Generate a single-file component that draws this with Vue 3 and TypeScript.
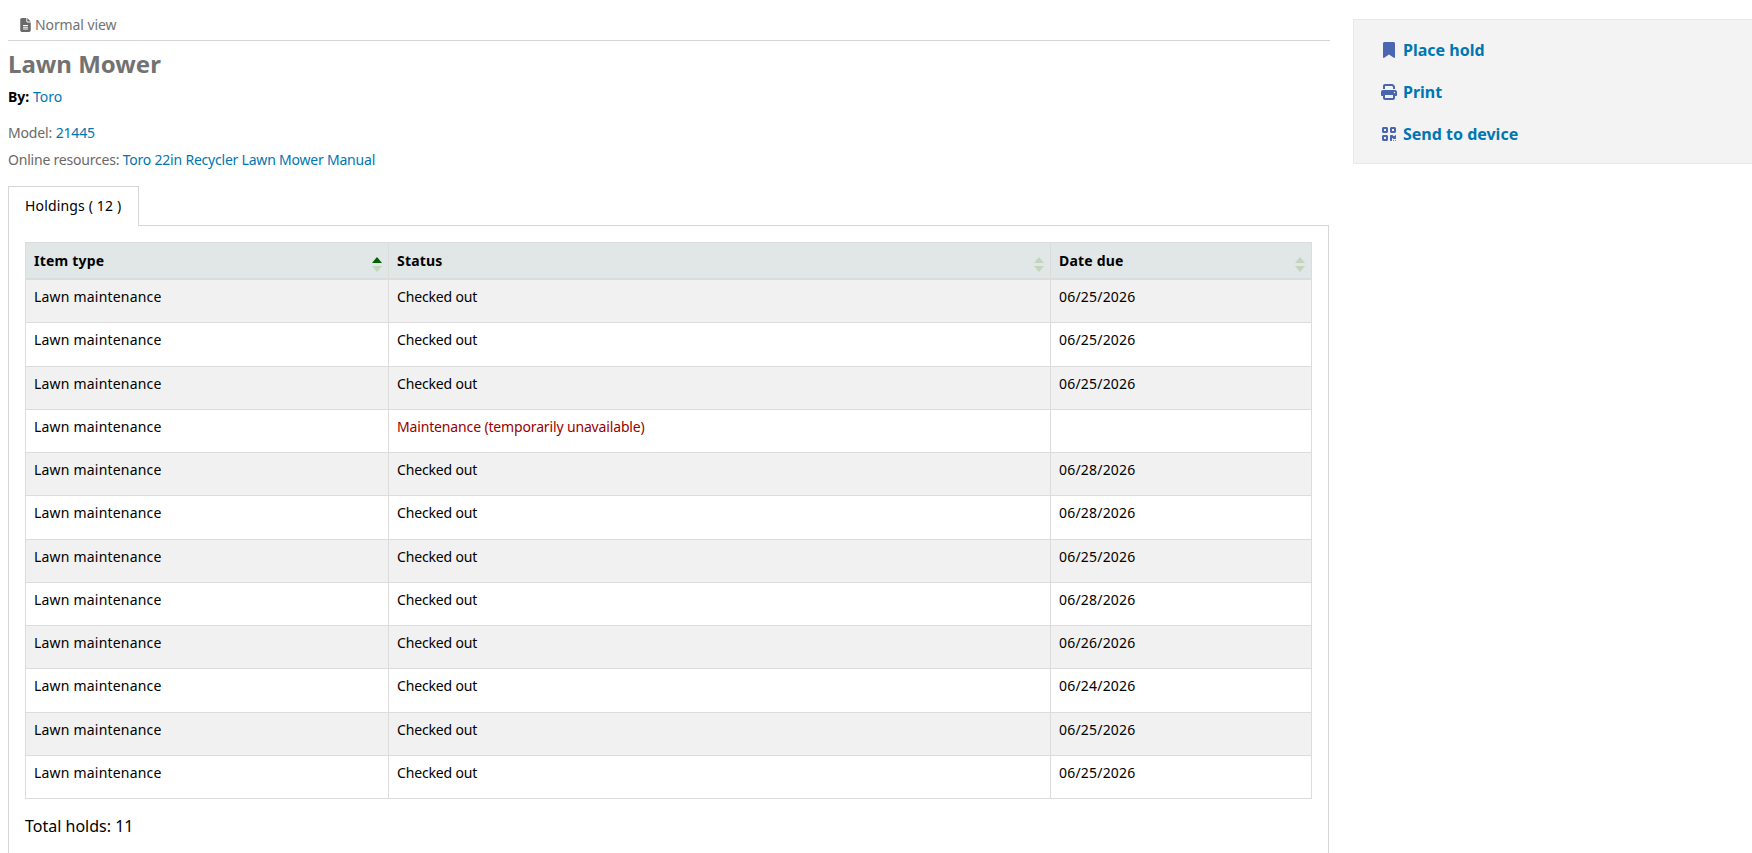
<script setup lang="ts">
interface Holding {
  status: string
  due: string
  unavailable?: boolean
}

const holdings: Holding[] = [
  { status: 'Checked out', due: '06/25/2026' },
  { status: 'Checked out', due: '06/25/2026' },
  { status: 'Checked out', due: '06/25/2026' },
  { status: 'Maintenance (temporarily unavailable)', due: '', unavailable: true },
  { status: 'Checked out', due: '06/28/2026' },
  { status: 'Checked out', due: '06/28/2026' },
  { status: 'Checked out', due: '06/25/2026' },
  { status: 'Checked out', due: '06/28/2026' },
  { status: 'Checked out', due: '06/26/2026' },
  { status: 'Checked out', due: '06/24/2026' },
  { status: 'Checked out', due: '06/25/2026' },
  { status: 'Checked out', due: '06/25/2026' },
]

const columns = ['Item type', 'Status', 'Date due']
</script>

<template>
  <div class="page">
    <main class="record">
      <div class="views">
        <svg class="view-icon" viewBox="0 0 384 512"><path d="M64 0C28.7 0 0 28.7 0 64V448c0 35.3 28.7 64 64 64H320c35.3 0 64-28.7 64-64V160H256c-17.7 0-32-14.3-32-32V0H64zM256 0V128H384L256 0zM112 256H272c8.8 0 16 7.2 16 16s-7.2 16-16 16H112c-8.8 0-16-7.2-16-16s7.2-16 16-16zm0 64H272c8.8 0 16 7.2 16 16s-7.2 16-16 16H112c-8.8 0-16-7.2-16-16s7.2-16 16-16zm0 64H272c8.8 0 16 7.2 16 16s-7.2 16-16 16H112c-8.8 0-16-7.2-16-16s7.2-16 16-16z" /></svg>
        <span>Normal view</span>
      </div>
      <h1 class="title">Lawn Mower</h1>
      <p class="author"><b>By:</b> <a href="#">Toro</a></p>
      <p class="meta first">Model: <a href="#">21445</a></p>
      <p class="meta">Online resources: <a href="#">Toro 22in Recycler Lawn Mower Manual</a></p>

      <div class="tab-row">
        <div class="tab">Holdings ( 12 )</div>
      </div>
      <section class="panel">
        <table class="holdings">
          <thead>
            <tr>
              <th v-for="(col, i) in columns" :key="col">
                {{ col }}
                <span class="sort">
                  <i class="up" :class="{ active: i === 0 }"></i>
                  <i class="down"></i>
                </span>
              </th>
            </tr>
          </thead>
          <tbody>
            <tr v-for="(row, i) in holdings" :key="i">
              <td class="type">Lawn maintenance</td>
              <td class="status" :class="{ unavailable: row.unavailable }">{{ row.status }}</td>
              <td class="due">{{ row.due }}</td>
            </tr>
          </tbody>
        </table>
        <p class="total">Total holds: 11</p>
      </section>
    </main>

    <aside class="actions">
      <a href="#" class="action">
        <span class="action-icon"><svg class="bookmark" viewBox="0 0 384 512"><path d="M0 48V487.7C0 501.1 10.9 512 24.3 512c5 0 9.9-1.5 14-4.4L192 400 345.7 507.6c4.1 2.9 9 4.4 14 4.4c13.4 0 24.3-10.9 24.3-24.3V48c0-26.5-21.5-48-48-48H48C21.5 0 0 21.5 0 48z" /></svg></span>
        Place hold
      </a>
      <a href="#" class="action">
        <span class="action-icon"><svg viewBox="0 0 512 512"><path d="M128 0C92.7 0 64 28.7 64 64v96h64V64H354.7L384 93.3V160h64V93.3c0-17-6.7-33.3-18.7-45.3L400 18.7C388 6.7 371.7 0 354.7 0H128zM384 352v32 64H128V384 368 352H384zm64 32h32c17.7 0 32-14.3 32-32V256c0-35.3-28.7-64-64-64H64c-35.3 0-64 28.7-64 64v96c0 17.7 14.3 32 32 32H64v64c0 35.3 28.7 64 64 64H384c35.3 0 64-28.7 64-64V384zM432 248a24 24 0 1 1 0 48 24 24 0 1 1 0-48z" /></svg></span>
        Print
      </a>
      <a href="#" class="action">
        <span class="action-icon"><svg class="qr" viewBox="0 0 448 512"><path d="M0 80C0 53.5 21.5 32 48 32h96c26.5 0 48 21.5 48 48v96c0 26.5-21.5 48-48 48H48c-26.5 0-48-21.5-48-48V80zM64 96v64h64V96H64zM0 336c0-26.5 21.5-48 48-48h96c26.5 0 48 21.5 48 48v96c0 26.5-21.5 48-48 48H48c-26.5 0-48-21.5-48-48V336zm64 16v64h64V352H64zM304 32h96c26.5 0 48 21.5 48 48v96c0 26.5-21.5 48-48 48H304c-26.5 0-48-21.5-48-48V80c0-26.5 21.5-48 48-48zm80 64H320v64h64V96zM256 304c0-8.8 7.2-16 16-16h64c8.8 0 16 7.2 16 16s7.2 16 16 16h32c8.8 0 16-7.2 16-16s7.2-16 16-16s16 7.2 16 16v96c0 8.8-7.2 16-16 16H368c-8.8 0-16-7.2-16-16s-7.2-16-16-16s-16 7.2-16 16v64c0 8.8-7.2 16-16 16H272c-8.8 0-16-7.2-16-16V304zM368 480a16 16 0 1 1 0-32 16 16 0 1 1 0 32zm64 0a16 16 0 1 1 0-32 16 16 0 1 1 0 32z" /></svg></span>
        Send to device
      </a>
    </aside>
  </div>
</template>

<style>
html,
body {
  margin: 0;
  overflow: hidden;
  background: #fff;
}
</style>

<style scoped>
.page {
  display: flex;
  align-items: flex-start;
  height: 853px;
  overflow: hidden;
  font-family: "Noto Sans", sans-serif;
  font-size: 14px;
  line-height: 21px;
  color: #696969;
}

a {
  color: #0076b2;
  text-decoration: none;
}

p {
  margin: 0;
}

.record {
  width: 1322px;
  margin-left: 8px;
  flex: none;
}

.views {
  display: flex;
  align-items: center;
  gap: 4px;
  height: 41px;
  padding-left: 12px;
  padding-top: 9px;
  box-sizing: border-box;
  border-bottom: 1px solid #d6d6d6;
  color: #727272;
  letter-spacing: -0.1px;
}

.view-icon {
  width: 11px;
  height: 14px;
  fill: #696969;
}

.title {
  margin: 8px 0 0;
  font-size: 24px;
  line-height: 29px;
  font-weight: 700;
  color: #727272;
}

.author {
  margin-top: 8px;
  color: #000;
}

.meta {
  margin-top: 6px;
  letter-spacing: -0.21px;
}

.meta.first {
  margin-top: 15px;
  letter-spacing: -0.15px;
}

.tab-row {
  display: flex;
  margin-top: 16px;
  margin-bottom: -1px;
}

.tab {
  position: relative;
  z-index: 1;
  height: 40px;
  padding: 8px 17px 0 16px;
  box-sizing: border-box;
  border: 1px solid #d6d6d6;
  border-bottom: 0;
  background: #fff;
  color: #000;
  letter-spacing: 0.15px;
}

.panel {
  width: 1321px;
  height: 800px;
  padding: 16px;
  box-sizing: border-box;
  border: 1px solid #d6d6d6;
  color: #000;
}

.holdings {
  table-layout: fixed;
  width: 1287px;
  border-collapse: collapse;
}

.holdings th,
.holdings td {
  border: 1px solid #dcdcdc;
  padding: 6px 8px 15.25px;
  text-align: left;
  vertical-align: top;
}

.holdings th {
  position: relative;
  padding: 7px 8px;
  height: 21px;
  border-bottom-width: 2px;
  background: #e1e6e6;
  font-weight: 700;
  letter-spacing: 0.2px;
}

.holdings th:nth-child(1) {
  width: 346px;
}

.holdings th:nth-child(2) {
  width: 645px;
}

.holdings tbody tr:nth-child(odd) td {
  background: #f1f1f1;
}

.holdings .type {
  letter-spacing: 0.2px;
}

.holdings .status {
  letter-spacing: -0.15px;
}

.holdings .status.unavailable {
  color: #900;
  letter-spacing: -0.15px;
}

.holdings .due {
  letter-spacing: 0.2px;
}

.sort {
  position: absolute;
  right: 6px;
  top: 14px;
  display: flex;
  flex-direction: column;
  gap: 3px;
}

.sort i {
  display: block;
  width: 0;
  height: 0;
  border-left: 5.5px solid transparent;
  border-right: 5.5px solid transparent;
}

.sort .up {
  border-bottom: 6.5px solid #c3d6bd;
}

.sort .up.active {
  border-bottom-color: #006100;
}

.sort .down {
  border-top: 6.5px solid #c3d6bd;
}

.total {
  margin-top: 15px;
  font-size: 16px;
  line-height: 24px;
}

.actions {
  flex: none;
  display: flex;
  flex-direction: column;
  width: 399px;
  height: 145px;
  margin: 19px 0 0 23px;
  padding: 19px 0 0 27px;
  box-sizing: border-box;
  gap: 20px;
  border: 1px solid #e8e8e8;
  border-right: 0;
  background: #f3f3f3;
}

.action {
  display: flex;
  align-items: center;
  height: 22px;
  font-size: 16px;
  font-weight: 700;
}

.action-icon {
  display: flex;
  justify-content: center;
  width: 16px;
  margin-right: 6px;
}

.action-icon svg {
  width: 16px;
  height: 16px;
  fill: #4a66b0;
}

.action-icon .bookmark {
  width: 12px;
}

.action-icon .qr {
  width: 14px;
}
</style>
